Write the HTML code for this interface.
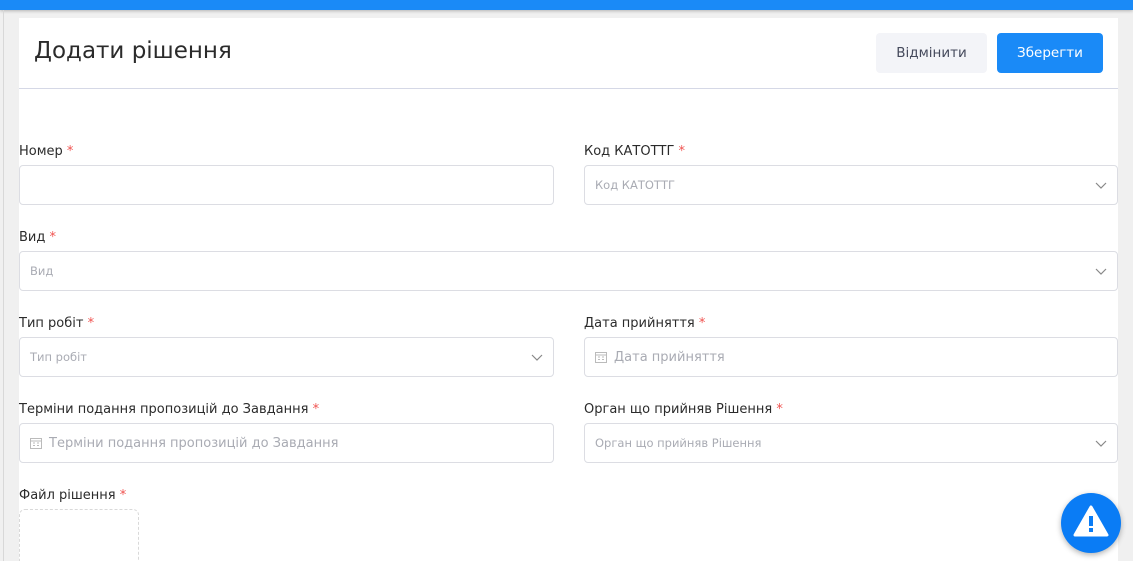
<!DOCTYPE html>
<html><head><meta charset="utf-8"><style>
*{box-sizing:border-box;margin:0;padding:0}
html,body{width:1133px;height:561px;overflow:hidden}
body{background:#f0f0f0;font-family:"DejaVu Sans","Liberation Sans",sans-serif;position:relative}
.top{position:absolute;left:0;top:0;width:1133px;height:10px;background:#1a8af7;box-shadow:0 1px 3px rgba(0,0,0,.25)}
.vl{position:absolute;left:3px;top:10px;width:1px;height:551px;background:#d8d8d8}
.card{position:absolute;left:19px;top:18px;width:1099px;height:543px;background:#fff}
h1{position:absolute;left:15px;top:20px;font-size:23px;font-weight:normal;color:#2b2b2b}
.hr{position:absolute;left:0;top:70px;width:1099px;height:1px;background:#d5d8e6}
.btn{position:absolute;top:15px;height:40px;border-radius:4px;font-size:13.5px;display:flex;align-items:center;justify-content:center}
.b1{left:857px;width:111px;background:#f3f4f8;color:#454a5c}
.b2{left:978px;width:106px;background:#1a8af7;color:#fff}
.lab{position:absolute;font-size:13px;color:#2b2b2b;margin-top:2px}
.lab span{color:#f0524f}
.in{position:absolute;height:40px;border:1px solid #dcdde3;border-radius:4px;font-size:11.5px;color:#a9abb3;display:flex;align-items:center;padding-left:10px}
.in svg.ch{position:absolute;right:10px;top:16px}
.cal{margin-right:7px}
.ph{font-size:13px}
.file{position:absolute;width:120px;height:60px;border:1px dashed #d9d9d9;border-radius:6px}
.fab{position:absolute;left:1061px;top:493px;width:60px;height:60px;border-radius:50%;background:#0a7cf5;box-shadow:0 2px 6px rgba(0,0,0,.3)}
</style></head><body>
<div class="top"></div><div class="vl"></div>
<div class="card">
<h1>Додати рішення</h1>
<div class="btn b1">Відмінити</div><div class="btn b2">Зберегти</div>
<div class="hr"></div>
</div>
<div class="lab" style="left:19px;top:142px">Номер <span>*</span></div>
<div class="in" style="left:19px;top:165px;width:535px"></div>
<div class="lab" style="left:584px;top:142px">Код КАТОТТГ <span>*</span></div>
<div class="in" style="left:584px;top:165px;width:534px">Код КАТОТТГ<svg class="ch" width="12" height="8"><path d="M1 1l5 5 5-5" fill="none" stroke="#888" stroke-width="1.2"/></svg></div>
<div class="lab" style="left:19px;top:228px">Вид <span>*</span></div>
<div class="in" style="left:19px;top:251px;width:1099px">Вид<svg class="ch" width="12" height="8"><path d="M1 1l5 5 5-5" fill="none" stroke="#888" stroke-width="1.2"/></svg></div>
<div class="lab" style="left:19px;top:314px">Тип робіт <span>*</span></div>
<div class="in" style="left:19px;top:337px;width:535px">Тип робіт<svg class="ch" width="12" height="8"><path d="M1 1l5 5 5-5" fill="none" stroke="#888" stroke-width="1.2"/></svg></div>
<div class="lab" style="left:584px;top:314px">Дата прийняття <span>*</span></div>
<div class="in ph" style="left:584px;top:337px;width:534px"><svg class="cal" width="12" height="12"><rect x="0.5" y="1.5" width="11" height="10" fill="none" stroke="#bbb"/><path d="M0 4h12M3 6h2M7 6h2M3 8.5h2M7 8.5h2" stroke="#bbb"/></svg>Дата прийняття</div>
<div class="lab" style="left:19px;top:400px">Терміни подання пропозицій до Завдання <span>*</span></div>
<div class="in ph" style="left:19px;top:423px;width:535px"><svg class="cal" width="12" height="12"><rect x="0.5" y="1.5" width="11" height="10" fill="none" stroke="#bbb"/><path d="M0 4h12M3 6h2M7 6h2M3 8.5h2M7 8.5h2" stroke="#bbb"/></svg>Терміни подання пропозицій до Завдання</div>
<div class="lab" style="left:584px;top:400px">Орган що прийняв Рішення <span>*</span></div>
<div class="in" style="left:584px;top:423px;width:534px">Орган що прийняв Рішення<svg class="ch" width="12" height="8"><path d="M1 1l5 5 5-5" fill="none" stroke="#888" stroke-width="1.2"/></svg></div>
<div class="lab" style="left:19px;top:486px">Файл рішення <span>*</span></div>
<div class="file" style="left:19px;top:509px"></div>
<div class="fab"><svg width="60" height="60"><path d="M30 14L46 42H14Z" fill="#fff" stroke="#fff" stroke-width="3" stroke-linejoin="round"/><rect x="28" y="23" width="4" height="10" fill="#0a7cf5"/><rect x="28" y="35" width="4" height="4" fill="#0a7cf5"/></svg></div>
</body></html>
